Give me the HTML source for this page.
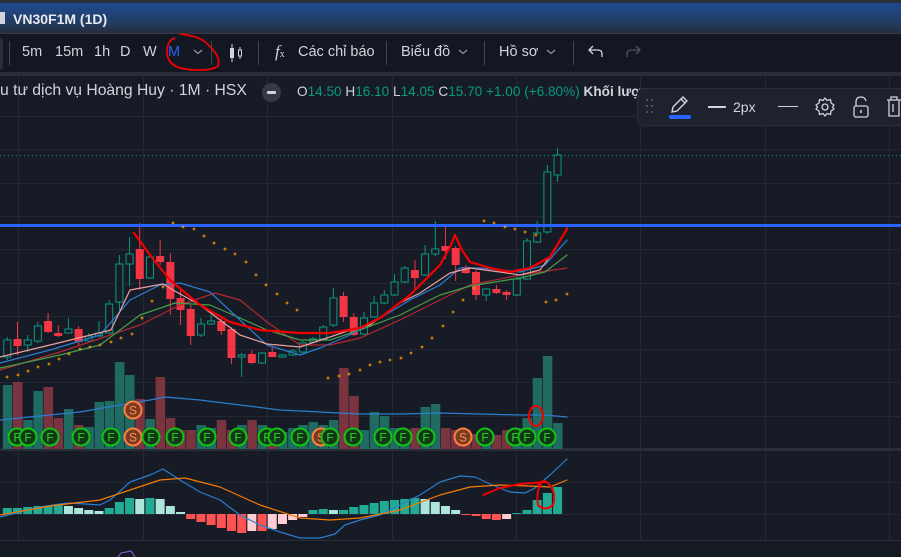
<!DOCTYPE html>
<html><head><meta charset="utf-8">
<style>
*{margin:0;padding:0;box-sizing:border-box}
body{width:901px;height:557px;overflow:hidden;background:#171b26;font-family:"Liberation Sans","Noto Sans CJK SC",sans-serif;position:relative;color:#d1d4dc}
.abs{position:absolute}
#top{left:0;top:0;width:901px;height:3px;background:#2a2e39}
#title{left:0;top:3px;width:901px;height:31px;background:linear-gradient(#1d4b8f,#233a5e 70%,#262d3d);border-bottom:1px solid #363a45}
#tb{left:0;top:34px;width:901px;height:38px;background:#131722}
#sep{left:0;top:72px;width:901px;height:4px;background:#2a2e39}
.t{position:absolute;font-size:14.5px;color:#d1d4dc;top:44px}
.vs{position:absolute;top:41px;width:1px;height:24px;background:#434651}
#dt{left:637px;top:88px;width:270px;height:38px;background:#1e222d;border-radius:6px;border:1px solid #2a2e39}
</style></head><body>
<div id="top" class="abs"></div>
<div id="title" class="abs">
<div class="abs" style="left:0;top:9px;width:5px;height:12px;background:#d1d4dc"></div>
<div class="abs" style="left:13px;top:8px;font-size:14px;font-weight:bold;color:#e8eaf0">VN30F1M (1D)</div>
</div>
<div id="tb" class="abs">
<div class="abs" style="left:0;top:4px;width:3px;height:32px;background:#2a2e39;border-radius:0 3px 3px 0"></div>
</div>
<div class="vs" style="left:9px"></div>
<div class="t" style="left:22px">5m</div>
<div class="t" style="left:55px">15m</div>
<div class="t" style="left:94px">1h</div>
<div class="t" style="left:120px">D</div>
<div class="t" style="left:143px">W</div>
<div class="t" style="left:168px;color:#2962ff">M</div>
<svg class="abs" style="left:193px;top:48px" width="10" height="8"><path d="M1 2 L5 5.5 L9 2" stroke="#9598a1" fill="none" stroke-width="1.2"/></svg>
<div class="vs" style="left:211px"></div>
<svg class="abs" style="left:228px;top:43px" width="16" height="20"><path d="M4 1V19M12 4V16" stroke="#d1d4dc" stroke-width="1"/><rect x="2" y="5" width="4" height="10" fill="#d1d4dc"/><rect x="10.5" y="7" width="3" height="6" fill="#131722" stroke="#d1d4dc"/></svg>
<div class="vs" style="left:258px"></div>
<div class="t" style="left:275px;font-family:'Liberation Serif',serif;font-style:italic;font-size:17px;top:42px">f<span style="font-size:10px;font-style:normal">x</span></div>
<div class="t" style="left:298px">Các chỉ báo</div>
<div class="vs" style="left:386px"></div>
<div class="t" style="left:401px">Biểu đồ</div>
<svg class="abs" style="left:458px;top:48px" width="10" height="8"><path d="M1 2 L5 5.5 L9 2" stroke="#9598a1" fill="none" stroke-width="1.2"/></svg>
<div class="vs" style="left:484px"></div>
<div class="t" style="left:499px">Hồ sơ</div>
<svg class="abs" style="left:546px;top:48px" width="10" height="8"><path d="M1 2 L5 5.5 L9 2" stroke="#9598a1" fill="none" stroke-width="1.2"/></svg>
<div class="vs" style="left:573px"></div>
<svg class="abs" style="left:587px;top:44px" width="18" height="16"><path d="M6 2 L2 6 L6 10 M2 6 H11 Q15 6 15 10 V13" stroke="#d1d4dc" fill="none" stroke-width="1.3"/></svg>
<svg class="abs" style="left:624px;top:44px" width="18" height="16"><path d="M12 2 L16 6 L12 10 M16 6 H7 Q3 6 3 10 V13" stroke="#50535e" fill="none" stroke-width="1.3"/></svg>
<div id="sep" class="abs"></div>

<svg class="abs" style="left:0;top:0" width="901" height="557" id="ch"></svg>

<div class="abs" style="left:0;top:82px;font-size:15.7px;color:#d1d4dc;white-space:nowrap">u tư dịch vụ Hoàng Huy · 1M · HSX</div>
<div class="abs" style="left:262px;top:83px;width:19px;height:19px;border-radius:50%;background:#363a45"><div class="abs" style="left:5px;top:8px;width:9px;height:3px;background:#d1d4dc;border-radius:1px"></div></div>
<div class="abs" style="left:297px;top:84px;font-size:13.6px;white-space:nowrap;color:#d1d4dc">O<span style="color:#089981">14.50</span> H<span style="color:#089981">16.10</span> L<span style="color:#089981">14.05</span> C<span style="color:#089981">15.70</span> <span style="color:#089981">+1.00 (+6.80%)</span> <b style="color:#d1d4dc">Khối lượ</b></div>

<div id="dt" class="abs">
<svg class="abs" style="left:8px;top:10px" width="8" height="16"><g fill="#50535e"><rect x="0" y="0" width="2" height="2"/><rect x="5" y="0" width="2" height="2"/><rect x="0" y="6" width="2" height="2"/><rect x="5" y="6" width="2" height="2"/><rect x="0" y="12" width="2" height="2"/><rect x="5" y="12" width="2" height="2"/></g></svg>
<svg class="abs" style="left:30px;top:5px" width="24" height="22"><path d="M4 18 L5 13 L15 3 L19 7 L9 17 Z M13 5 L17 9" stroke="#d1d4dc" fill="none" stroke-width="1.4"/></svg>
<div class="abs" style="left:31px;top:26px;width:22px;height:4px;background:#2962ff;border-radius:2px"></div>
<div class="abs" style="left:70px;top:17px;width:18px;height:2px;background:#d1d4dc"></div>
<div class="abs" style="left:95px;top:10px;font-size:14px;color:#d1d4dc">2px</div>
<div class="abs" style="left:140px;top:17px;width:20px;height:1px;background:#d1d4dc"></div>
<svg class="abs" style="left:176px;top:7px" width="22" height="22"><circle cx="11" cy="11" r="3" stroke="#d1d4dc" fill="none" stroke-width="1.3"/><path d="M11 2 L13 4.5 L16.5 3.5 L17 7 L20 9 L18.5 11 L20 13 L17 15 L16.5 18.5 L13 17.5 L11 20 L9 17.5 L5.5 18.5 L5 15 L2 13 L3.5 11 L2 9 L5 7 L5.5 3.5 L9 4.5 Z" stroke="#d1d4dc" fill="none" stroke-width="1.3" stroke-linejoin="round"/></svg>
<svg class="abs" style="left:213px;top:6px" width="20" height="24"><path d="M5 11 V7 Q5 2 10 2 Q14 2 15 6" stroke="#d1d4dc" fill="none" stroke-width="1.3"/><rect x="3" y="11" width="14" height="11" rx="2" stroke="#d1d4dc" fill="none" stroke-width="1.3"/><path d="M10 15V18" stroke="#d1d4dc" stroke-width="1.5"/></svg>
<svg class="abs" style="left:248px;top:6px" width="16" height="24"><path d="M1 5H15M5 5V2H11V5M3 5V21H13V5M7 9V17" stroke="#d1d4dc" fill="none" stroke-width="1.3"/></svg>
</div>

<script>
var s='';
function L(x1,y1,x2,y2,c,w,extra){s+='<line x1="'+x1+'" y1="'+y1+'" x2="'+x2+'" y2="'+y2+'" stroke="'+c+'" stroke-width="'+(w||1)+'" '+(extra||'')+'/>';}
function P(pts,c,w,extra){s+='<polyline fill="none" stroke="'+c+'" stroke-width="'+w+'" stroke-linejoin="round" stroke-linecap="round" '+(extra||'')+' points="'+pts.map(p=>p.join(',')).join(' ')+'"/>';}
var vx=[18,143,267,392,516,640,765,889];
vx.forEach(x=>L(x+.5,76,x+.5,557,'#242835'));
for(var y=116;y<449;y+=33.3)L(0,Math.round(y)+.5,901,Math.round(y)+.5,'#242835');
[482,514].forEach(y=>L(0,y+.5,901,y+.5,'#242835'));
s+='<rect x="0" y="448" width="901" height="3" fill="#2a2e39"/>';
s+='<rect x="0" y="541" width="901" height="16" fill="#151922"/>';
L(0,540.5,901,540.5,'#2a2e39');
var vol=[385,382,420,391,387,418,409,425,427,402,401,362,375,399,419,377,418,430,430,425,428,420,430,425,420,425,430,432,428,425,422,425,420,368,396,430,412,416,428,432,428,407,404,428,430,430,434,440,435,430,428,418,378,356,423];
var up=[1,0,1,1,0,0,1,0,1,1,1,1,1,0,1,0,0,0,0,1,1,0,0,1,0,1,0,1,1,1,1,1,1,0,0,1,1,1,1,1,0,1,1,0,0,0,0,1,0,0,1,1,1,1,1];
function X(i){return 7.3+i*10.19;}
vol.forEach((t,i)=>{s+='<rect x="'+(X(i)-4.5)+'" y="'+t+'" width="9.5" height="'+(449-t)+'" fill="'+(up[i]?'#1f6b62':'#7a3440')+'"/>';});
P([[0,420],[40,416],[80,412],[120,405],[150,400],[165,397],[200,400],[240,405],[280,410],[320,412],[360,414],[400,414],[440,413],[480,414],[520,415],[545,415],[567,417]],'#2a7dd1',1.3);
var C=[[1,337,340,357,360],[0,322,339,346,355],[1,335,340,345,352],[1,322,326,341,343],[0,313,321,332,333],[0,325,333,336,337],[1,318,329,333,333],[0,326,329,342,346],[1,333,336,341,342],[1,321,333,336,337],[1,300,304,333,334],[1,255,264,302,310],[1,237,254,264,286],[0,223,249,279,290],[1,255,257,278,279],[0,240,256,262,265],[0,253,262,299,315],[0,290,298,310,325],[0,305,309,336,345],[1,318,324,335,337],[1,315,321,324,325],[0,318,321,331,335],[0,327,329,358,364],[1,353,355,357,377],[0,350,354,363,364],[1,352,353,363,364],[0,346,352,357,357],[1,354,355,357,358],[1,349,351,355,356],[1,341,343,352,354],[1,337,339,342,343],[1,325,327,339,340],[1,288,298,325,327],[0,292,296,317,322],[0,313,317,335,336],[1,312,318,334,335],[1,296,303,317,318],[1,290,295,303,304],[1,274,282,295,296],[1,266,268,282,283],[0,260,270,278,290],[1,245,254,275,276],[1,221,249,254,256],[0,226,246,251,259],[0,246,248,265,281],[0,265,267,273,274],[0,270,272,295,300],[1,288,289,295,301],[0,285,289,293,294],[0,290,292,295,300],[1,276,279,295,296],[1,238,241,279,280],[1,221,233,242,243],[1,165,172,232,234],[1,148,155,175,182]];
C.forEach((c,i)=>{var x=X(i),col=c[0]?'#089981':'#f23645';L(x,c[1],x,c[4],col,1);
 if(c[0])s+='<rect x="'+(x-3.5)+'" y="'+c[2]+'" width="7" height="'+Math.max(1,c[3]-c[2])+'" fill="#171b26" stroke="'+col+'" stroke-width="1"/>';
 else s+='<rect x="'+(x-4)+'" y="'+c[2]+'" width="8" height="'+Math.max(2,c[3]-c[2])+'" fill="'+col+'"/>';});
L(0,155.5,901,155.5,'#089981',1,'stroke-dasharray="1 3"');
s+='<rect x="0" y="224" width="901" height="3" fill="#2962ff"/>';
P([[0,370],[60,352],[140,325],[180,305],[215,293],[240,300],[267,322],[300,345],[330,345],[360,338],[400,320],[440,300],[470,285],[520,275],[567,268]],'#b22833',1.2);
P([[0,368],[60,355],[100,345],[140,315],[175,303],[210,305],[240,318],[267,330],[300,340],[330,340],[360,330],[400,315],[440,295],[470,286],[520,278],[545,272],[567,255]],'#43a047',1.2);
P([[0,363],[50,350],[100,335],[130,300],[160,285],[180,283],[210,292],[240,320],[267,345],[300,355],[320,348],[350,335],[380,318],[410,300],[440,285],[460,268],[480,268],[520,272],[545,265],[567,240]],'#2a7dd1',1.2);
P([[0,357],[50,345],[111,330],[130,290],[163,284],[173,290],[200,305],[240,335],[267,344],[300,347],[330,337],[350,330],[370,325],[400,303],[420,293],[450,273],[470,268],[500,272],[520,275],[540,270],[555,250],[567,228]],'#e8a0a0',1.2);
var sar=[[7,377],[18,375],[28,371],[38,367],[49,364],[59,359],[69,354],[80,349],[90,347],[100,345],[111,342],[121,338],[132,334],[142,318],[152,301],[163,287],[173,223],[183,227],[194,229],[204,236],[214,243],[225,249],[235,254],[246,262],[256,275],[266,285],[277,294],[287,303],[297,310],[328,378],[339,376],[349,374],[360,370],[370,365],[380,362],[390,360],[401,358],[411,353],[422,347],[432,338],[443,326],[453,312],[463,300],[474,288],[484,221],[494,223],[505,227],[515,229],[525,232],[536,235],[546,302],[556,300],[567,294]];
sar.forEach(p=>{s+='<path d="M'+(p[0]-1.5)+' '+p[1]+'h3M'+p[0]+' '+(p[1]-1.5)+'v3" stroke="#ff9800" stroke-width="1"/>';});
P([[134,233],[150,255],[170,280],[200,305],[230,322],[260,330],[300,333],[330,333],[360,328],[380,318],[410,295],[440,265],[450,247],[455,235],[462,250],[470,262],[490,268],[510,272],[530,268],[550,257],[567,229]],'#f20000',2.2);
var F=[17,28,50,81,111,151,175,207,238,267,277,300,330,353,383,403,426,485,515,527,547];
[[133,437],[321,437],[463,437]].forEach(p=>{s+='<circle cx="'+p[0]+'" cy="'+p[1]+'" r="8.5" fill="#7a3b20" stroke="#ff7f3f" stroke-width="2"/><text x="'+p[0]+'" y="'+(p[1]+4.5)+'" fill="#ff8f50" font-size="12" font-family="Liberation Sans" text-anchor="middle">S</text>';});
F.forEach(x=>{s+='<circle cx="'+x+'" cy="437" r="8.5" fill="#123818" stroke="#12c212" stroke-width="2"/><text x="'+x+'" y="441.5" fill="#2ad62a" font-size="12" font-family="Liberation Sans" text-anchor="middle">F</text>';});
s+='<circle cx="133" cy="410" r="8.5" fill="#7a3b20" stroke="#ff7f3f" stroke-width="2"/><text x="133" y="414.5" fill="#ff8f50" font-size="12" font-family="Liberation Sans" text-anchor="middle">S</text>';
s+='<ellipse cx="536" cy="416" rx="7" ry="10" fill="none" stroke="#f20000" stroke-width="2"/>';
var H=[508,508,507,506,506,505,506,508,510,511,508,502,498,499,498,499,506,512,519,522,525,528,531,533,531,531,529,524,520,517,510,509,510,510,507,505,503,501,500,499,498,499,502,506,510,515,516,519,520,519,513,510,500,493,487];
var Z=514;
H.forEach((t,i)=>{var pos=t<Z,prev=i?H[i-1]:t,col;
 if(pos)col=(t<=prev)?'#22ab94':'#ace5dc';else col=(t>=prev)?'#ff5252':'#ffcdd2';
 var y=pos?t:Z,h=Math.abs(Z-t);s+='<rect x="'+(X(i)-4.5)+'" y="'+y+'" width="9" height="'+Math.max(1,h)+'" fill="'+col+'"/>';});
P([[0,517],[20,512],[40,507],[60,504],[70,503],[100,505],[110,500],[130,482],[150,475],[163,469],[180,480],[200,492],[220,500],[240,515],[260,525],[280,532],[300,538],[320,538],[335,534],[345,525],[360,520],[380,515],[400,505],[420,495],[440,482],[460,476],[475,477],[490,484],[510,492],[525,493],[535,488],[550,475],[567,459]],'#2a7dd1',1.2);
P([[0,515],[50,506],[100,500],[130,490],[160,480],[185,478],[220,487],[260,505],[300,518],[330,520],[360,518],[400,510],[440,495],[470,487],[500,485],[530,486],[550,487],[567,480]],'#f57c00',1.2);
P([[483,495],[500,488],[520,484],[545,482]],'#f20000',2);
s+='<path d="M541 484 Q536 490 538 505 Q545 512 553 505 Q557 492 548 483 Q542 478 538 486" fill="none" stroke="#f20000" stroke-width="2"/>';
P([[118,557],[121,553],[131,551],[135,557]],'#7e57c2',1.2);
document.getElementById('ch').innerHTML=s;
</script>
<svg class="abs" style="left:160px;top:28px" width="70" height="46"><path d="M20 6 Q38 8 45 14 Q62 28 58 38 Q50 44 25 41 Q6 38 7 22 Q8 12 15 10" fill="none" stroke="#f20000" stroke-width="1.8"/></svg>
</body></html>
